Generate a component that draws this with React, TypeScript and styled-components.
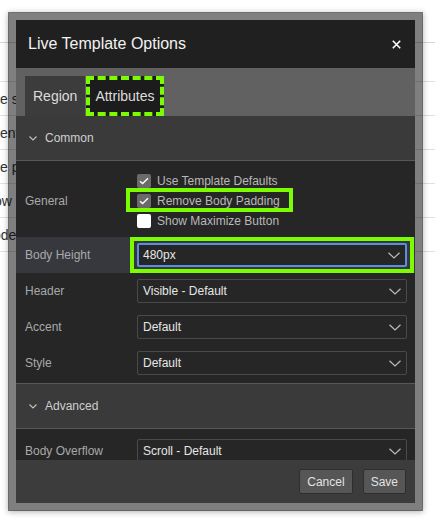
import React from 'react';
import styled, { createGlobalStyle } from 'styled-components';

const GREEN = '#7cfc00';

const GlobalStyle = createGlobalStyle`
  body {
    margin: 0;
    background: #fff;
    font-family: "Liberation Sans", Arial, sans-serif;
  }
`;

const bgRows = [
  { text: 'e settings', shift: 0 },
  { text: 'ent', shift: 0 },
  { text: 'e padding', shift: 0 },
  { text: 'ow Body', shift: -6 },
  { text: 'ode (', shift: -7 },
];

const Chevron: React.FC<{ small?: boolean }> = ({ small }) =>
  small ? (
    <svg width="8" height="5" viewBox="0 0 8 5">
      <polyline points="0.5,0.5 4,4 7.5,0.5" fill="none" stroke="#c4c4c4" strokeWidth="1.1" />
    </svg>
  ) : (
    <svg width="12" height="7" viewBox="0 0 12 7">
      <polyline points="0.5,0.8 6,6 11.5,0.8" fill="none" stroke="#bdbdbd" strokeWidth="1.2" />
    </svg>
  );

const CheckMark = () => (
  <svg width="10" height="8" viewBox="0 0 10 8">
    <polyline points="1,4.2 3.6,6.6 9,1.2" fill="none" stroke="#fff" strokeWidth="1.4" />
  </svg>
);

const checks = [
  { label: 'Use Template Defaults', checked: true, focused: false },
  { label: 'Remove Body Padding', checked: true, focused: true },
  { label: 'Show Maximize Button', checked: false, focused: false },
];

const selects = [
  { label: 'Header', value: 'Visible - Default' },
  { label: 'Accent', value: 'Default' },
  { label: 'Style', value: 'Default' },
];

const App: React.FC = () => {
  return (
    <Page>
      <GlobalStyle />
      <BgHeader />
      <BgList>
        {bgRows.map((r, i) => (
          <BgRow key={i}>
            <BgText $shift={r.shift}>{r.text}</BgText>
          </BgRow>
        ))}
      </BgList>

      <Dialog>
        <TitleBar>
          <Title>Live Template Options</Title>
          <CloseButton>
            <svg width="9" height="9" viewBox="0 0 9 9">
              <path d="M0.8 0.8 L8.2 8.2 M8.2 0.8 L0.8 8.2" stroke="#fff" strokeWidth="1.6" />
            </svg>
          </CloseButton>
        </TitleBar>

        <TabBar>
          <Tab>Region</Tab>
          <Tab $focused>Attributes</Tab>
        </TabBar>

        <Body>
          <Section>
            <SectionHeader>
              <Chevron small />
              Common
            </SectionHeader>
            <SectionContent>
              <Row>
                <Label>General</Label>
                <CheckList>
                  {checks.map((c) => (
                    <CheckRow key={c.label} $focused={c.focused}>
                      <CheckBox $checked={c.checked}>{c.checked && <CheckMark />}</CheckBox>
                      <CheckLabel>{c.label}</CheckLabel>
                    </CheckRow>
                  ))}
                </CheckList>
              </Row>
              <Row $current>
                <Label>Body Height</Label>
                <SelectWrap $focused>
                  <Select $focused>
                    <span>480px</span>
                    <Chevron />
                  </Select>
                </SelectWrap>
              </Row>
              {selects.map((s) => (
                <Row key={s.label}>
                  <Label>{s.label}</Label>
                  <SelectWrap>
                    <Select>
                      <span>{s.value}</span>
                      <Chevron />
                    </Select>
                  </SelectWrap>
                </Row>
              ))}
            </SectionContent>
          </Section>

          <Section>
            <SectionHeader>
              <Chevron small />
              Advanced
            </SectionHeader>
            <SectionContent>
              <Row>
                <Label>Body Overflow</Label>
                <SelectWrap>
                  <Select>
                    <span>Scroll - Default</span>
                    <Chevron />
                  </Select>
                </SelectWrap>
              </Row>
            </SectionContent>
          </Section>
        </Body>

        <Footer>
          <Button>Cancel</Button>
          <Button>Save</Button>
        </Footer>
      </Dialog>
    </Page>
  );
};

export default App;

const Page = styled.div`
  position: relative;
  width: 435px;
  height: 522px;
  overflow: hidden;
  background: #fff;
`;

const BgHeader = styled.div`
  height: 42px;
  border-bottom: 1px solid #d6d6d6;
`;

const BgList = styled.div`
  margin-top: 38px;
  border-top: 1px solid #e0e0e0;
`;

const BgRow = styled.div`
  height: 33px;
  display: flex;
  align-items: center;
  border-bottom: 1px solid #e0e0e0;
`;

const BgText = styled.span<{ $shift: number }>`
  margin-left: ${(p) => p.$shift}px;
  font-size: 14px;
  color: #333;
  white-space: nowrap;
`;

const Dialog = styled.div`
  position: absolute;
  left: 8px;
  top: 12px;
  width: 399px;
  height: 483px;
  display: flex;
  flex-direction: column;
  border: 8px solid rgba(0, 0, 0, 0.5);
  background: #262626;
  background-clip: padding-box;
  box-shadow: 0 1px 6px rgba(0, 0, 0, 0.3);
  overflow: hidden;
`;

const TitleBar = styled.div`
  height: 48px;
  flex: none;
  display: flex;
  align-items: center;
  justify-content: space-between;
  padding: 0 7px 0 12px;
  background: #202020;
`;

const Title = styled.h1`
  margin: 0;
  font-size: 16px;
  font-weight: normal;
  color: #f2f2f2;
`;

const CloseButton = styled.button`
  width: 24px;
  height: 24px;
  display: flex;
  align-items: center;
  justify-content: center;
  padding: 0;
  border: none;
  background: transparent;
`;

const TabBar = styled.div`
  height: 48px;
  flex: none;
  display: flex;
  align-items: flex-end;
  gap: 1px;
  padding: 8px 0 0 9px;
  box-sizing: border-box;
  background: #616161;
`;

const Tab = styled.div<{ $focused?: boolean }>`
  height: 40px;
  box-sizing: border-box;
  display: flex;
  align-items: center;
  font-size: 14px;
  color: #dcdcdc;
  padding: ${(p) => (p.$focused ? '0 5px' : '0 8px')};
  background: ${(p) => (p.$focused ? '#1c1c1c' : '#3c3c3c')};
  border: ${(p) => (p.$focused ? `4px dashed ${GREEN}` : 'none')};
`;

const Body = styled.div`
  flex: 1;
  overflow: hidden;
  background: #262626;
`;

const Section = styled.div``;

const SectionHeader = styled.div`
  height: 44px;
  display: flex;
  align-items: center;
  gap: 8px;
  padding-left: 13px;
  background: #3a3a3a;
  border-bottom: 1px solid #585858;
  font-size: 12px;
  color: #cfcfcf;
`;

const SectionContent = styled.div`
  padding: 4px 0 2px;
  background: #262626;
  border-bottom: 1px solid #585858;
`;

const Row = styled.div<{ $current?: boolean }>`
  display: grid;
  grid-template-columns: 112px 1fr;
  align-items: center;
  padding: 6px 8px 6px 9px;
  background: ${(p) => (p.$current ? '#36383e' : 'transparent')};
`;

const Label = styled.div`
  font-size: 12px;
  color: #a9a9a9;
`;

const CheckList = styled.div`
  display: flex;
  flex-direction: column;
  align-items: flex-start;
`;

const CheckRow = styled.div<{ $focused?: boolean }>`
  position: relative;
  height: 20px;
  display: flex;
  align-items: center;
  gap: 6px;

  &::after {
    content: '';
    display: ${(p) => (p.$focused ? 'block' : 'none')};
    position: absolute;
    left: -11px;
    right: -13px;
    top: -3px;
    bottom: -1px;
    border: 4px solid ${GREEN};
  }
`;

const CheckBox = styled.span<{ $checked: boolean }>`
  width: 14px;
  height: 14px;
  display: flex;
  align-items: center;
  justify-content: center;
  border-radius: 2px;
  background: ${(p) => (p.$checked ? '#6a6a6a' : '#fff')};
`;

const CheckLabel = styled.span`
  font-size: 12px;
  color: #b9b9b9;
`;

const SelectWrap = styled.div<{ $focused?: boolean }>`
  position: relative;

  &::after {
    content: '';
    display: ${(p) => (p.$focused ? 'block' : 'none')};
    position: absolute;
    left: -7px;
    right: -7px;
    top: -6px;
    bottom: -6px;
    border: 4px solid ${GREEN};
  }
`;

const Select = styled.div<{ $focused?: boolean }>`
  height: 24px;
  box-sizing: border-box;
  display: flex;
  align-items: center;
  justify-content: space-between;
  padding: ${(p) => (p.$focused ? '0 5px 0 4px' : '0 5px 0 5px')};
  border: ${(p) => (p.$focused ? '2px solid #5b8ede' : '1px solid #4a4a4a')};
  border-radius: 2px;
  background: #262626;
  font-size: 12px;
  color: #e6e6e6;
`;

const Footer = styled.div`
  height: 43px;
  flex: none;
  display: flex;
  align-items: center;
  justify-content: flex-end;
  gap: 10px;
  padding-right: 9px;
  background: #3c3c3c;
`;

const Button = styled.button`
  height: 25px;
  margin: 0;
  padding: 0 7px;
  border: 1px solid #2e2e2e;
  border-radius: 2px;
  background: #565656;
  color: #e2e2e2;
  font-family: "Liberation Sans", Arial, sans-serif;
  font-size: 12px;
`;
